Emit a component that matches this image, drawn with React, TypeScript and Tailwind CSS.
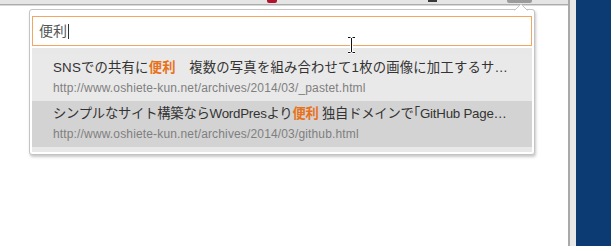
import React from 'react';

const results = [
  {
    id: 'r-1',
    before: 'SNSでの共有に',
    after: '\u3000複数の写真を組み合わせて1枚の画像に加工するサ…',
    url: 'http://www.oshiete-kun.net/archives/2014/03/_pastet.html',
    active: false,
  },
  {
    id: 'r-2',
    before: 'シンプルなサイト構築ならWordPresより',
    after: ' 独自ドメインで｢GitHub Page…',
    url: 'http://www.oshiete-kun.net/archives/2014/03/github.html',
    active: true,
  },
];

const IBeam: React.FC = () => (
  <svg width="9" height="18" viewBox="0 0 9 18" className="absolute left-[347px] top-[36px]">
    <path d="M1 1.5h2.5M5.5 1.5H8M4.5 2v14M1 16.5h2.5M5.5 16.5H8" stroke="#fff" strokeWidth="3" />
    <path d="M1 1.5h2.5M5.5 1.5H8M4.5 2v14M1 16.5h2.5M5.5 16.5H8" stroke="#111" strokeWidth="1" />
  </svg>
);

const App: React.FC = () => {
  return (
    <div
      className="flex h-[246px] w-[611px] overflow-hidden bg-white"
      style={{ fontFamily: '"Liberation Sans", "Noto Sans CJK JP", sans-serif' }}
    >
      <div className="relative flex w-[568px] flex-col">
        {/* ツールバーの下端 */}
        <div className="flex h-[4px] items-start bg-[#e5e5e5]">
          <div className="ml-[267px] h-[3px] w-[10px] rounded-b-[2px] bg-[#b3122e]" />
          <div className="ml-[151px] h-[2px] w-[9px] bg-[#3a3a3a]" />
          <div className="ml-[70px] h-[3px] w-[25px] rounded-b-[2px] bg-[#9c9c9c]" />
        </div>
        <div className="h-px bg-[#acacac]" />
        <div className="h-px bg-[#d9d9d9]" />

        <div className="pl-[29px] pt-[3px]">
          <div className="relative w-[506px] rounded-[3px] border border-[#c4c4c4] bg-white px-[2px] pt-[6px] pb-[2px] shadow-[1px_2px_3px_rgba(0,0,0,0.22)]">
            <svg width="14" height="8" viewBox="0 0 14 8" className="absolute left-[484px] top-[-7px]">
              <path d="M0 8L7 1L14 8Z" fill="#fff" />
              <path d="M0.5 7.5L7 1L13.5 7.5" fill="none" stroke="#c4c4c4" strokeWidth="1" />
            </svg>

            <div className="flex h-[30px] items-center border border-[#f2a664] px-[6px] text-[14px] text-[#555]">
              <span>便利</span>
              <span className="ml-[1px] h-[15px] w-px bg-[#333]" />
            </div>

            <div className="mt-[2px] bg-[#e8e8e8] pt-[7px] pb-[5px]">
              {results.map(r => (
                <div
                  key={r.id}
                  className={`h-[46px] pl-[21px] pr-[12px] pt-[4px] ${r.active ? 'bg-[#d3d3d3]' : 'bg-[#e9e9e9]'}`}
                >
                  <p
                    className={`whitespace-nowrap text-[13.33px] leading-[18px] text-[#333] ${r.active ? 'tracking-[-0.25px]' : 'tracking-[0.2px]'}`}
                  >
                    {r.before}
                    <b className="text-[#e8721c]">便利</b>
                    {r.after}
                  </p>
                  <p className="mt-[3px] whitespace-nowrap text-[12px] leading-[16px] tracking-[0.15px] text-[#7f7f7f]">
                    {r.url}
                  </p>
                </div>
              ))}
            </div>
          </div>
        </div>

        <IBeam />
      </div>
      <div className="w-[2px] bg-[#a9a9a9]" />
      <div className="w-[6px] bg-[#e8e8e8]" />
      <div className="flex-1 bg-[#0c3b73]" />
    </div>
  );
};

export default App;
